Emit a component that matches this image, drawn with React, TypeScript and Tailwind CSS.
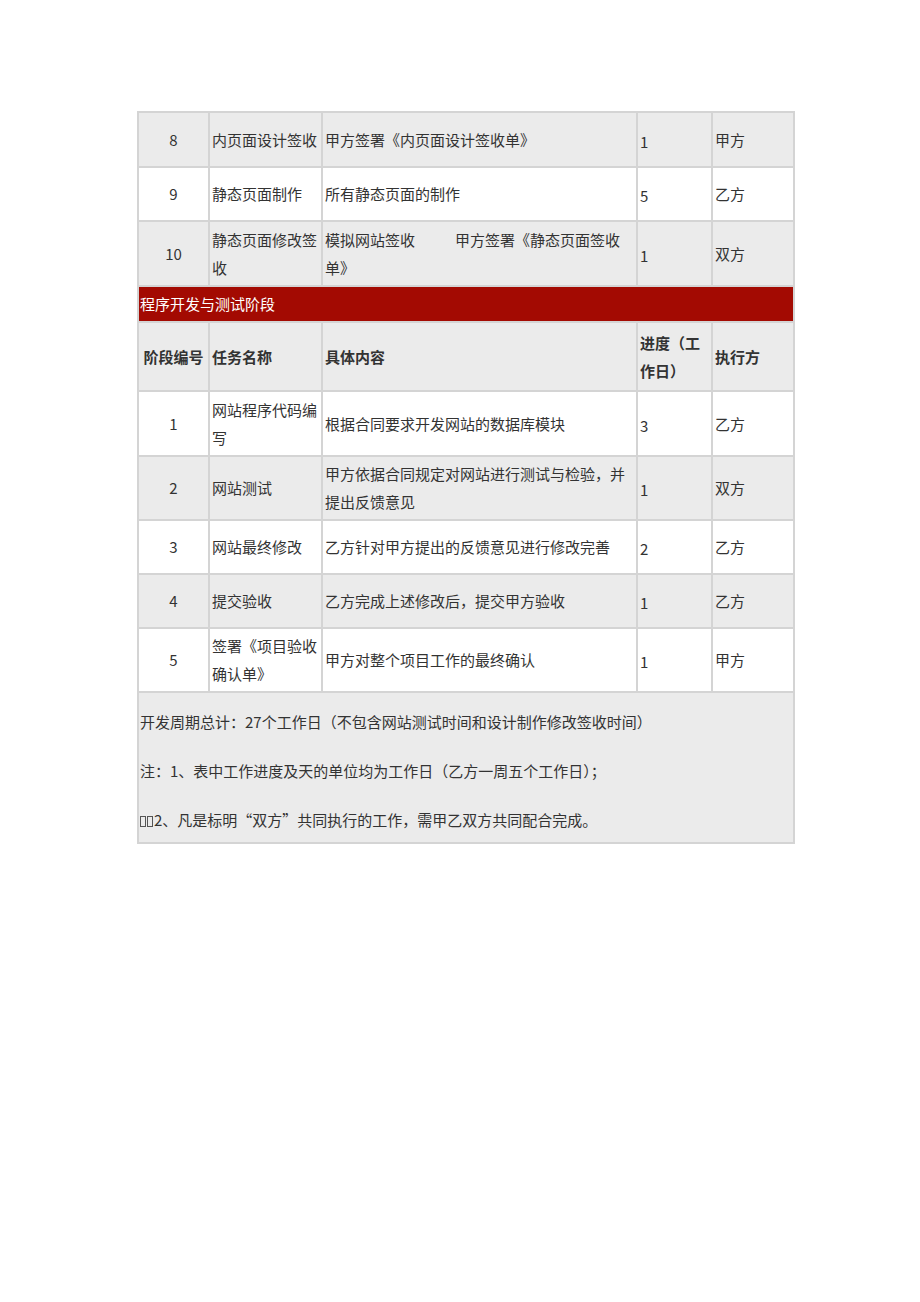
import React from "react";

const font = { fontFamily: '"Noto Sans CJK SC", "Noto Sans", sans-serif' };

type Row = { no: string; name: string; content: React.ReactNode; days: string; who: string; gray: boolean; h: string };

const Tofu = () => (
  <span className="inline-block w-[6px] h-[11px] border border-[#555] mr-[1px] align-[-1px]" />
);

export default function App() {
  const td = "border border-[#d4d4d4] px-[2px] align-middle text-[15px] leading-[28px] text-[#333]";
  const top: Row[] = [
    { no: "8", name: "内页面设计签收", content: "甲方签署《内页面设计签收单》", days: "1", who: "甲方", gray: true, h: "h-[55px]" },
    { no: "9", name: "静态页面制作", content: "所有静态页面的制作", days: "5", who: "乙方", gray: false, h: "h-[54px]" },
    {
      no: "10",
      name: "静态页面修改签收",
      content: <span className="whitespace-pre-wrap">{"模拟网站签收\u3000\u3000\u00A0\u00A0 甲方签署《静态页面签收单》"}</span>,
      days: "1",
      who: "双方",
      gray: true,
      h: "h-[65px]",
    },
  ];
  const bottom: Row[] = [
    { no: "1", name: "网站程序代码编写", content: "根据合同要求开发网站的数据库模块", days: "3", who: "乙方", gray: false, h: "h-[65px]" },
    { no: "2", name: "网站测试", content: "甲方依据合同规定对网站进行测试与检验，并提出反馈意见", days: "1", who: "双方", gray: true, h: "h-[64px]" },
    { no: "3", name: "网站最终修改", content: "乙方针对甲方提出的反馈意见进行修改完善", days: "2", who: "乙方", gray: false, h: "h-[54px]" },
    { no: "4", name: "提交验收", content: "乙方完成上述修改后，提交甲方验收", days: "1", who: "乙方", gray: true, h: "h-[54px]" },
    { no: "5", name: "签署《项目验收确认单》", content: "甲方对整个项目工作的最终确认", days: "1", who: "甲方", gray: false, h: "h-[64px]" },
  ];

  const renderRow = (r: Row, i: number) => (
    <tr key={i} className={`${r.h} ${r.gray ? "bg-[#ebebeb]" : "bg-white"}`}>
      <td className={`${td} text-center`}>{r.no}</td>
      <td className={td}>{r.name}</td>
      <td className={td}>{r.content}</td>
      <td className={`${td} pt-[4px]`}>{r.days}</td>
      <td className={td}>{r.who}</td>
    </tr>
  );

  return (
    <div className="min-h-[1302px] w-[920px] bg-white pt-[111px] pl-[137px]" style={font}>
      <table className="w-[658px] table-fixed border-separate border-spacing-0 border border-[#d4d4d4]">
        <colgroup>
          <col className="w-[71px]" />
          <col className="w-[113px]" />
          <col className="w-[315px]" />
          <col className="w-[75px]" />
          <col className="w-[82px]" />
        </colgroup>
        <tbody>
          {top.map(renderRow)}
          <tr className="h-[36px] bg-[#a30a02]">
            <td colSpan={5} className="border border-[#d4d4d4] px-[1px] align-middle text-[15px] leading-[28px] text-white">
              程序开发与测试阶段
            </td>
          </tr>
          <tr className="h-[69px] bg-[#ebebeb] font-bold">
            <td className={`${td} text-center`}>阶段编号</td>
            <td className={td}>任务名称</td>
            <td className={td}>具体内容</td>
            <td className={td}>进度（工作日）</td>
            <td className={td}>执行方</td>
          </tr>
          {bottom.map(renderRow)}
          <tr className="bg-[#ebebeb]">
            <td colSpan={5} className="border border-[#d4d4d4] px-[1px] pt-[15px] pb-[8px] text-[15px] leading-[28px] text-[#333]">
              <div className="flex flex-col gap-[21px]">
                <p>开发周期总计：27个工作日（不包含网站测试时间和设计制作修改签收时间）</p>
                <p>注：1、表中工作进度及天的单位均为工作日（乙方一周五个工作日）；</p>
                <p>
                  <Tofu />
                  <Tofu />
                  2、凡是标明“双方”共同执行的工作，需甲乙双方共同配合完成。
                </p>
              </div>
            </td>
          </tr>
        </tbody>
      </table>
    </div>
  );
}
